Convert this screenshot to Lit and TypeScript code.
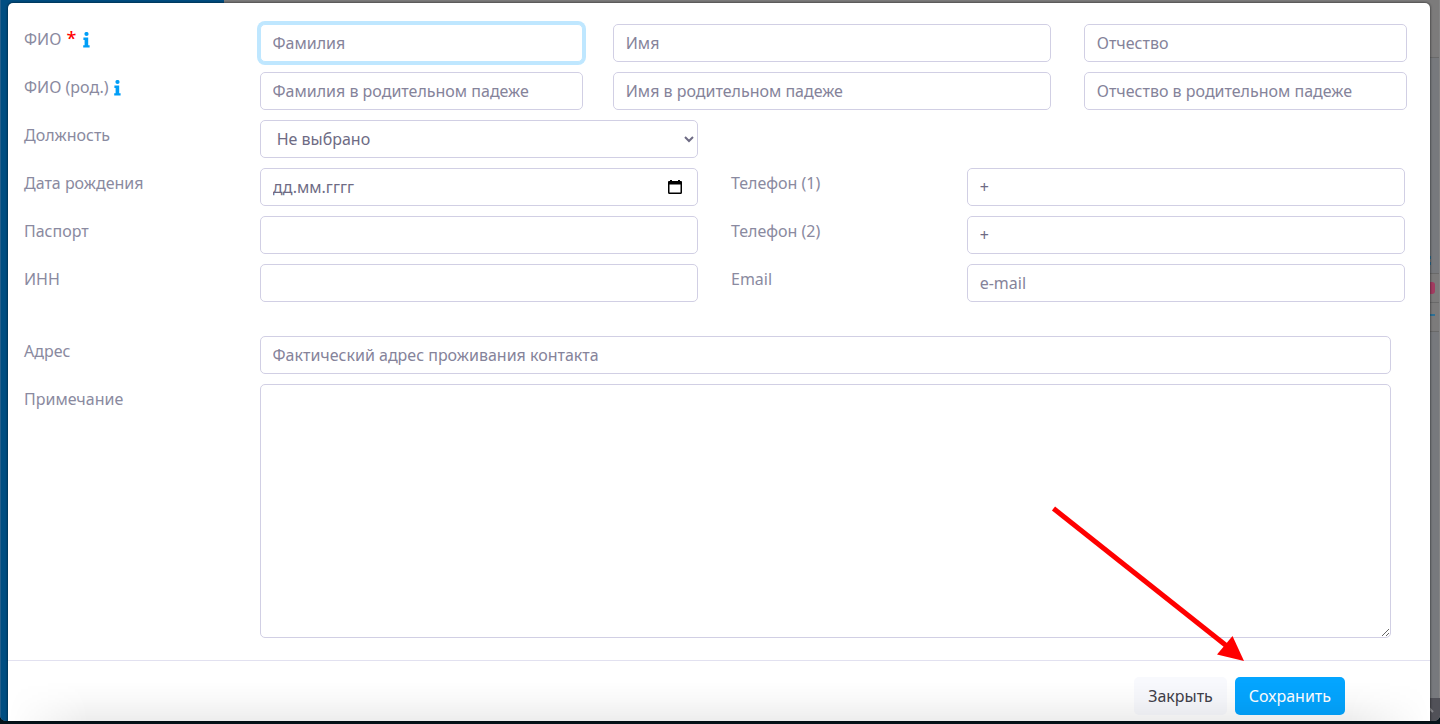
import { LitElement, html, css } from "lit";
import { customElement } from "lit/decorators.js";

const infoIcon = html`<svg class="info" viewBox="0 0 7 16" aria-hidden="true">
  <circle cx="3.5" cy="2" r="2.1" />
  <path d="M0.4 5.6H5.2V13.2H6.6V15.6H0.2V13.2H1.6V8H0.4Z" />
</svg>`;

@customElement("app-root")
export class AppRoot extends LitElement {
  static styles = css`
    :host {
      display: block;
      position: relative;
      min-height: 100vh;
      overflow: hidden;
      background: #05131a;
      color: #8a8aa0;
      font: 16px/24px "Noto Sans", "Open Sans", sans-serif;
    }
    * {
      box-sizing: border-box;
    }
    .page {
      position: absolute;
      inset: 0 0 3px;
      display: flex;
      border-radius: 0 0 6px 6px;
      overflow: hidden;
      background: #7c7b7b;
    }
    .sidebar {
      width: 224px;
      background: #004e82;
      border-left: 1px solid #265f8b;
    }
    .behind {
      flex: 1;
      display: flex;
      justify-content: flex-end;
    }
    .edge {
      width: 10px;
      height: 721px;
    }
    .dialog {
      position: relative;
      margin: 3px 10px 3px 8px;
      padding-top: 21px;
      background: #fff;
      border-radius: 5px 5px 0 0;
      box-shadow: 0 0 2px 1px rgba(0, 0, 0, 0.35);
      overflow: hidden;
    }
    .fields {
      padding: 0 8px 12px 1px;
      border-bottom: 1px solid #e2e1f0;
    }
    .row {
      display: grid;
      margin-bottom: 10px;
    }
    .names {
      grid-template-columns: 2fr 3fr 4fr 3fr;
    }
    .pair {
      grid-template-columns: 2fr 4fr 2fr 4fr;
      margin-right: -1px;
    }
    .wide {
      grid-template-columns: 2fr 10fr;
    }
    .spaced {
      margin-top: 34px;
    }
    .cell {
      min-width: 0;
      padding: 0 15px;
      display: flex;
      position: relative;
    }
    .half {
      padding-right: 18px;
    }
    .full {
      padding-right: 31px;
    }
    .caption {
      display: block;
      padding: 3px 15px 0;
    }
    .required {
      margin: 0 1px;
      color: #f00;
      font-size: 18px;
      font-weight: 500;
      line-height: 16px;
    }
    .info {
      width: 7px;
      height: 16px;
      margin-left: 1px;
      vertical-align: -3px;
      fill: #009ef7;
    }
    .control {
      display: block;
      width: 100%;
      min-width: 0;
      height: 38px;
      margin: 0;
      padding: 6px 12px;
      font: inherit;
      color: #6e6b84;
      background: #fff;
      border: 1px solid #d1cfe4;
      border-radius: 5px;
      outline: none;
    }
    .control::placeholder {
      color: #85839a;
      opacity: 1;
    }
    .active {
      border-color: #bfe7ff;
      box-shadow: 0 0 0 3px #bfe7ff;
    }
    .date::placeholder {
      color: #6e6b84;
    }
    .note {
      height: auto;
      resize: vertical;
    }
    .calendar {
      position: absolute;
      right: 33px;
      top: 11px;
      width: 16px;
      height: 16px;
      padding: 0;
      border: 0;
      background: none;
    }
    .calendar svg {
      display: block;
      width: 16px;
      height: 16px;
    }
    .footer {
      display: flex;
      justify-content: flex-end;
      gap: 8px;
      padding: 16px 85px 6px 16px;
    }
    .button {
      height: 38px;
      padding: 6px 14px;
      font: inherit;
      border: 0;
      border-radius: 5px;
    }
    .close {
      background: #f8f9fd;
      color: #3f4049;
    }
    .save {
      background: #04a5ff;
      color: #fff;
    }
    .shade {
      position: absolute;
      inset: auto 0 0;
      height: 40px;
      pointer-events: none;
      background: linear-gradient(rgba(0, 0, 0, 0), rgba(0, 0, 0, 0.02) 40%, rgba(0, 0, 0, 0.07));
      mask-image: linear-gradient(90deg, transparent, #000 80px, #000 calc(100% - 80px), transparent);
    }
    .arrow {
      position: absolute;
      right: 190px;
      bottom: 60px;
      width: 200px;
      height: 160px;
      pointer-events: none;
    }
  `;

  render() {
    return html`
      <div class="page" aria-hidden="true">
        <div class="sidebar"></div>
        <div class="behind">
          <svg class="edge" viewBox="0 0 10 721">
            <path fill="#77797d" d="M0 58H10V273H0ZM0 331H10V698H0Z" />
            <path fill="#696969" d="M0 57H10V58H0ZM0 273H10V274H0ZM0 302H10V303H0ZM0 331H10V332H0Z" />
            <path fill="#2d7197" d="M0 256H1V259H0ZM0 262H1V265H0ZM0 314H5V316H0V319H-3V314Z" />
            <rect fill="#a33c61" x="-8" y="282" width="13" height="12" rx="3" />
            <path fill="#858585" d="M9 0H10V721H9Z" />
            <path fill="#515158" d="M-20 698H10V721H-20Z" />
            <path fill="none" stroke="#88888d" stroke-width="2" d="M-5 712L-1 708L3 712" />
          </svg>
        </div>
      </div>

      <form class="dialog" role="dialog" aria-label="Контакт" @submit=${(e: Event) => e.preventDefault()}>
        <div class="fields">
          <div class="row names">
            <label class="caption" for="surname">ФИО <span class="required">*</span> ${infoIcon}</label>
            <div class="cell"><input class="control active" id="surname" placeholder="Фамилия" /></div>
            <div class="cell half"><input class="control" aria-label="Имя" placeholder="Имя" /></div>
            <div class="cell"><input class="control" aria-label="Отчество" placeholder="Отчество" /></div>
          </div>
          <div class="row names">
            <label class="caption" for="surname-gen">ФИО (род.) ${infoIcon}</label>
            <div class="cell"><input class="control" id="surname-gen" placeholder="Фамилия в родительном падеже" /></div>
            <div class="cell half"><input class="control" aria-label="Имя в родительном падеже" placeholder="Имя в родительном падеже" /></div>
            <div class="cell"><input class="control" aria-label="Отчество в родительном падеже" placeholder="Отчество в родительном падеже" /></div>
          </div>
          <div class="row pair">
            <label class="caption" for="position">Должность</label>
            <div class="cell half">
              <select class="control" id="position"><option>Не выбрано</option></select>
            </div>
          </div>
          <div class="row pair">
            <label class="caption" for="birthday">Дата рождения</label>
            <div class="cell half">
              <input class="control date" id="birthday" placeholder="дд.мм.гггг" inputmode="numeric" />
              <button class="calendar" type="button" aria-label="Выбрать дату">
                <svg viewBox="0 0 16 16" aria-hidden="true">
                  <path fill-rule="evenodd" d="M3 1H5V2H11V1H13V2H14Q15 2 15 3V13.5Q15 15 13.5 15H2.5Q1 15 1 13.5V3Q1 2 2 2H3ZM2.5 5.5V13.5H13.5V5.5Z" />
                </svg>
              </button>
            </div>
            <label class="caption" for="phone-1">Телефон (1)</label>
            <div class="cell half"><input class="control" id="phone-1" type="tel" value="+" /></div>
          </div>
          <div class="row pair">
            <label class="caption" for="passport">Паспорт</label>
            <div class="cell half"><input class="control" id="passport" /></div>
            <label class="caption" for="phone-2">Телефон (2)</label>
            <div class="cell half"><input class="control" id="phone-2" type="tel" value="+" /></div>
          </div>
          <div class="row pair">
            <label class="caption" for="inn">ИНН</label>
            <div class="cell half"><input class="control" id="inn" /></div>
            <label class="caption" for="email">Email</label>
            <div class="cell half"><input class="control" id="email" type="email" placeholder="e-mail" /></div>
          </div>
          <div class="row wide spaced">
            <label class="caption" for="address">Адрес</label>
            <div class="cell full"><input class="control" id="address" placeholder="Фактический адрес проживания контакта" /></div>
          </div>
          <div class="row wide">
            <label class="caption" for="note">Примечание</label>
            <div class="cell full"><textarea class="control note" id="note" rows="10"></textarea></div>
          </div>
        </div>
        <div class="footer">
          <button class="button close" type="button">Закрыть</button>
          <button class="button save" type="submit">Сохранить</button>
        </div>
        <div class="shade"></div>
      </form>

      <svg class="arrow" viewBox="0 0 200 160" aria-hidden="true">
        <path d="M3.500 4.500L178 143" stroke="#f00" stroke-width="5" />
        <path d="M182.500 132L167 150.500L194 157Z" fill="#f00" />
      </svg>
    `;
  }
}
